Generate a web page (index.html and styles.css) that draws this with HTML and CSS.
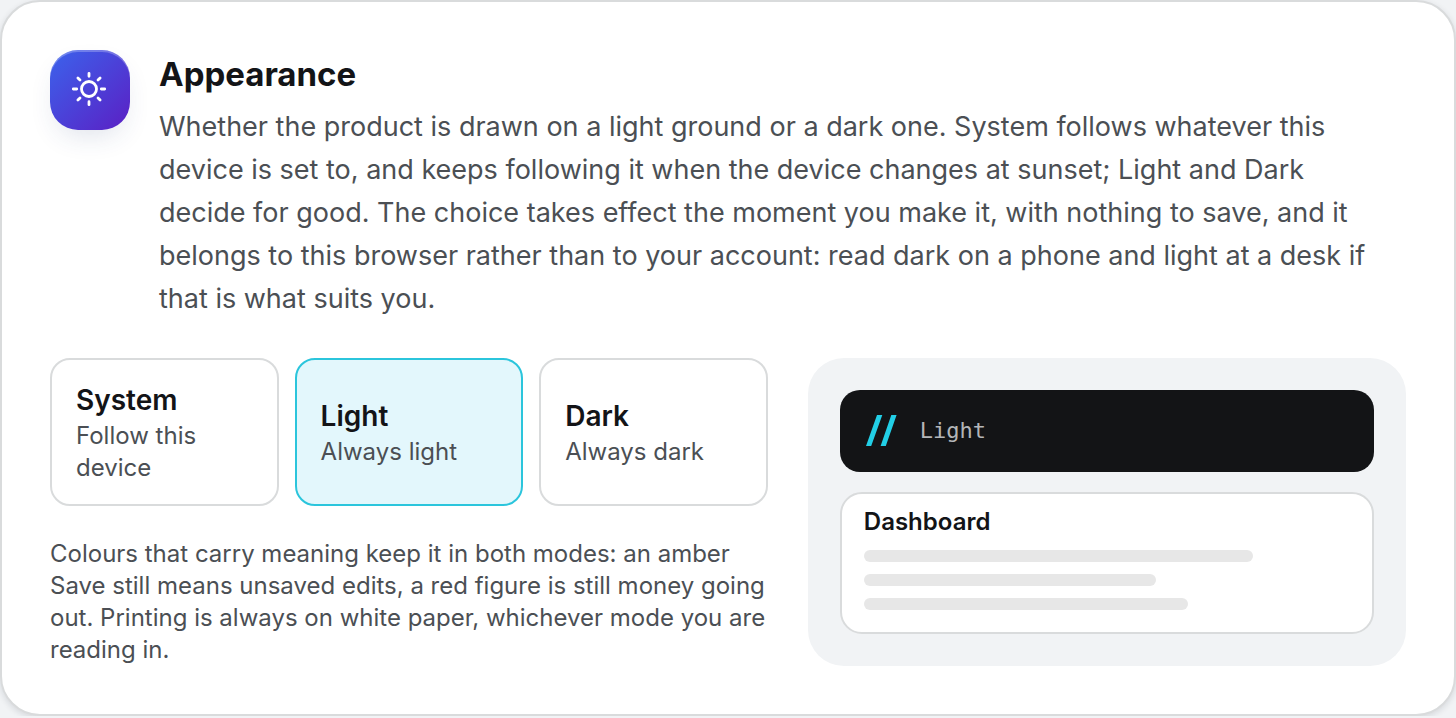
FILE: index.html
```html
<!DOCTYPE html>
<html lang="en-GB">
<head>
<meta charset="utf-8">
<meta name="viewport" content="width=device-width, initial-scale=1">
<title>Appearance</title>
<link rel="stylesheet" href="styles.css">
</head>
<body>
<section class="card" aria-labelledby="appearance-title">
  <header class="card-header">
    <div class="card-icon">
      <svg viewBox="0 0 40 40" width="40" height="40" fill="none" stroke="#fff" stroke-width="2.800" stroke-linecap="round" aria-hidden="true">
        <circle cx="19" cy="19" r="7.500"/>
        <path d="M19 3.300v3M19 31.700v3M3.300 19h3.400M31.300 19h3.400M7.900 7.900l2.100 2.100M28 28l2.100 2.100M7.900 30.100l2.100-2.100M28 10l2.100-2.100"/>
      </svg>
    </div>
    <div class="card-intro">
      <h2 class="card-title" id="appearance-title">Appearance</h2>
      <p class="card-text">Whether the product is drawn on a light ground or a dark one. System follows whatever this device is set to, and keeps following it when the device changes at sunset; Light and Dark decide for good. The choice takes effect the moment you make it, with nothing to save, and it belongs to this browser rather than to your account: read dark on a phone and light at a desk if that is what suits you.</p>
    </div>
  </header>
  <div class="card-body">
    <div class="settings">
      <div class="options" role="group" aria-labelledby="appearance-title">
        <button class="option" type="button" aria-pressed="false"><span class="option-name">System</span><span class="option-hint">Follow this device</span></button>
        <button class="option option-selected" type="button" aria-pressed="true"><span class="option-name">Light</span><span class="option-hint">Always light</span></button>
        <button class="option" type="button" aria-pressed="false"><span class="option-name">Dark</span><span class="option-hint">Always dark</span></button>
      </div>
      <p class="note">Colours that carry meaning keep it in both modes: an amber Save still means unsaved edits, a red figure is still money going out. Printing is always on white paper, whichever mode you are reading in.</p>
    </div>
    <div class="preview">
      <div class="preview-bar">
        <svg class="preview-logo" viewBox="0 0 34 32" width="34" height="32" fill="#22cfe6" aria-hidden="true">
          <path d="M13 0h5.300L7.200 31H2zM27.300 0h5.300L21.800 31h-5.200z"/>
        </svg>
        <span class="preview-mode">Light</span>
      </div>
      <div class="preview-page">
        <div class="preview-heading">Dashboard</div>
        <div class="preview-line line-long"></div>
        <div class="preview-line line-short"></div>
        <div class="preview-line line-medium"></div>
      </div>
    </div>
  </div>
</section>
</body>
</html>
```
FILE: styles.css
```css
* {
  box-sizing: border-box;
}

body {
  margin: 0;
  background: #f1f3f5;
  color: #131417;
  font-family: Inter, "Liberation Sans", sans-serif;
}

.card {
  padding: 48px;
  border: 2px solid #d9dbdc;
  border-radius: 40px;
  background: #fff;
  box-shadow: 0 2px 6px rgba(16, 24, 40, 0.12);
}

.card-header {
  display: flex;
  gap: 29px;
  margin-bottom: 38px;
}

.card-icon {
  display: grid;
  flex: none;
  place-items: center;
  width: 80px;
  height: 80px;
  border-radius: 28px;
  background: linear-gradient(135deg, #3b63ec, #5b1fc4);
  box-shadow: inset 0 2px 0 rgba(255, 255, 255, 0.25), 0 12px 28px -8px rgba(40, 60, 120, 0.16);
}

.card-intro {
  flex: 1;
  padding-right: 16px;
}

.card-title {
  margin: 0 0 7px;
  font-size: 33px;
  font-weight: 700;
  line-height: 48px;
}

.card-text {
  margin: 0;
  color: #4b4f54;
  font-size: 27px;
  line-height: 43px;
}

.card-body {
  display: grid;
  grid-template-columns: 6fr 5fr;
  gap: 40px;
}

.options {
  display: grid;
  grid-template-columns: repeat(3, 1fr);
  gap: 16px;
}

.option {
  display: flex;
  flex-direction: column;
  justify-content: center;
  padding: 20px 24px;
  border: 2px solid #d9dbdc;
  border-radius: 20px;
  background: #fff;
  color: inherit;
  font-family: inherit;
  text-align: left;
}

.option-selected {
  border-color: #2bc5dc;
  background: #e3f7fc;
}

.option-name {
  font-size: 28px;
  font-weight: 600;
  line-height: 40px;
}

.option-hint,
.note {
  color: #4b4f54;
  font-size: 24px;
  line-height: 32px;
}

.note {
  margin: 32px 0 0;
}

.preview {
  display: flex;
  flex-direction: column;
  gap: 20px;
  padding: 32px;
  border-radius: 36px;
  background: #f1f3f5;
}

.preview-bar {
  display: flex;
  align-items: center;
  gap: 22px;
  padding: 25px 24px;
  border-radius: 20px;
  background: #131416;
}

.preview-mode {
  color: #b4b6b8;
  font-family: "DejaVu Sans Mono", monospace;
  font-size: 22px;
  line-height: 32px;
}

.preview-page {
  display: flex;
  flex: 1;
  flex-direction: column;
  gap: 12px;
  padding: 12px 22px;
  border: 2px solid #d9dbdc;
  border-radius: 22px;
  background: #fff;
}

.preview-heading {
  font-size: 24px;
  font-weight: 600;
  line-height: 32px;
}

.preview-line {
  height: 12px;
  border-radius: 6px;
  background: #e7e7e7;
}

.line-long {
  width: 80%;
}

.line-short {
  width: 60%;
}

.line-medium {
  width: calc(200% / 3);
}
```
